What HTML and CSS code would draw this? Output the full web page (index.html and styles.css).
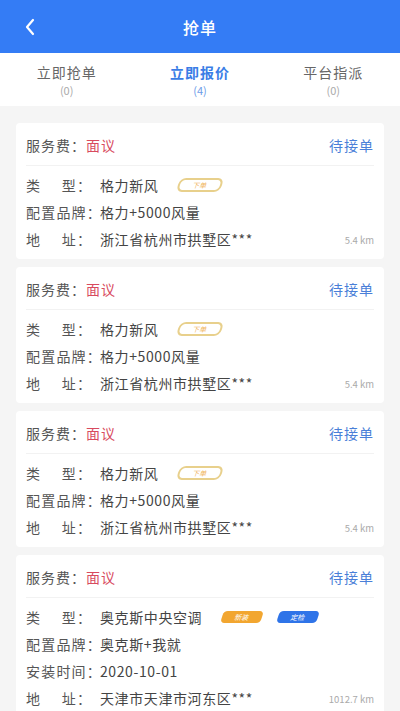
FILE: index.html
```html
<!DOCTYPE html>
<html lang="zh-CN">
<head>
    <meta charset="UTF-8">
    <meta name="viewport" content="width=device-width, initial-scale=1.0">
    <title>抢单</title>
    <link rel="stylesheet" href="styles.css">
</head>
<body>
    <div class="topbar">
        <svg class="back" width="12" height="18" viewBox="0 0 12 18">
            <polyline points="9,2 3,9 9,16" fill="none" stroke="#fff" stroke-width="2.2" stroke-linecap="round" stroke-linejoin="round"/>
        </svg>
        <div class="title">抢单</div>
    </div>

    <div class="tabs">
        <div class="tab">
            <span class="tab-name">立即抢单</span>
            <span class="tab-count">(0)</span>
        </div>
        <div class="tab active">
            <span class="tab-name">立即报价</span>
            <span class="tab-count">(4)</span>
        </div>
        <div class="tab">
            <span class="tab-name">平台指派</span>
            <span class="tab-count">(0)</span>
        </div>
    </div>

    <div class="list">
        <div class="card">
            <div class="card-head">
                <div class="fee">服务费：<span class="price">面议</span></div>
                <div class="status">待接单</div>
            </div>
            <div class="card-body">
                <div class="row">
                    <div class="label"><span class="name short">类型</span>：</div>
                    <div class="value">格力新风</div>
                    <span class="tag outline">下单</span>
                </div>
                <div class="row">
                    <div class="label"><span class="name">配置品牌</span>：</div>
                    <div class="value">格力+5000风量</div>
                </div>
                <div class="row">
                    <div class="label"><span class="name short">地址</span>：</div>
                    <div class="value">浙江省杭州市拱墅区***</div>
                    <span class="distance">5.4 km</span>
                </div>
            </div>
        </div>

        <div class="card">
            <div class="card-head">
                <div class="fee">服务费：<span class="price">面议</span></div>
                <div class="status">待接单</div>
            </div>
            <div class="card-body">
                <div class="row">
                    <div class="label"><span class="name short">类型</span>：</div>
                    <div class="value">格力新风</div>
                    <span class="tag outline">下单</span>
                </div>
                <div class="row">
                    <div class="label"><span class="name">配置品牌</span>：</div>
                    <div class="value">格力+5000风量</div>
                </div>
                <div class="row">
                    <div class="label"><span class="name short">地址</span>：</div>
                    <div class="value">浙江省杭州市拱墅区***</div>
                    <span class="distance">5.4 km</span>
                </div>
            </div>
        </div>

        <div class="card">
            <div class="card-head">
                <div class="fee">服务费：<span class="price">面议</span></div>
                <div class="status">待接单</div>
            </div>
            <div class="card-body">
                <div class="row">
                    <div class="label"><span class="name short">类型</span>：</div>
                    <div class="value">格力新风</div>
                    <span class="tag outline">下单</span>
                </div>
                <div class="row">
                    <div class="label"><span class="name">配置品牌</span>：</div>
                    <div class="value">格力+5000风量</div>
                </div>
                <div class="row">
                    <div class="label"><span class="name short">地址</span>：</div>
                    <div class="value">浙江省杭州市拱墅区***</div>
                    <span class="distance">5.4 km</span>
                </div>
            </div>
        </div>

        <div class="card">
            <div class="card-head">
                <div class="fee">服务费：<span class="price">面议</span></div>
                <div class="status">待接单</div>
            </div>
            <div class="card-body">
                <div class="row">
                    <div class="label"><span class="name short">类型</span>：</div>
                    <div class="value">奥克斯中央空调</div>
                    <span class="tag orange">新装</span>
                    <span class="tag blue">定检</span>
                </div>
                <div class="row">
                    <div class="label"><span class="name">配置品牌</span>：</div>
                    <div class="value">奥克斯+我就</div>
                </div>
                <div class="row">
                    <div class="label"><span class="name">安装时间</span>：</div>
                    <div class="value">2020-10-01</div>
                </div>
                <div class="row">
                    <div class="label"><span class="name short">地址</span>：</div>
                    <div class="value">天津市天津市河东区***</div>
                    <span class="distance">1012.7 km</span>
                </div>
            </div>
        </div>
    </div>
</body>
</html>
```

FILE: styles.css
```css
body {
    margin: 0;
    font-family: "Noto Sans CJK SC", "Noto Sans", sans-serif;
    background-color: #f5f5f5;
    color: #444;
}
.topbar {
    position: relative;
    height: 53px;
    background-color: #347cf5;
    display: flex;
    align-items: center;
    justify-content: center;
}
.back {
    position: absolute;
    left: 24px;
    top: 18px;
}
.title {
    color: #fff;
    font-size: 16px;
    font-weight: 500;
    letter-spacing: 1px;
}
.tabs {
    height: 53px;
    background: #fff;
    display: grid;
    grid-template-columns: 1fr 1fr 1fr;
}
.tab {
    display: flex;
    flex-direction: column;
    align-items: center;
    justify-content: center;
    padding-top: 2px;
}
.tab-name {
    font-size: 14px;
    letter-spacing: 1px;
    color: #666;
    line-height: 18px;
}
.tab-count {
    font-size: 11px;
    color: #aaa;
    line-height: 16px;
    margin-top: 1px;
}
.tab.active .tab-name {
    color: #3a7de6;
    font-weight: bold;
}
.tab.active .tab-count {
    color: #6b9be8;
}
.list {
    padding: 17px 16px 0;
    display: flex;
    flex-direction: column;
    gap: 8px;
}
.card {
    background: #fff;
    border-radius: 4px;
    padding: 0 10px;
}
.card-head {
    height: 43px;
    display: flex;
    align-items: center;
    justify-content: space-between;
    border-bottom: 1px solid #f2f2f2;
    font-size: 14px;
    letter-spacing: 1px;
    padding-top: 1px;
    box-sizing: border-box;
}
.fee {
    color: #555;
}
.price {
    color: #d84a5e;
}
.status {
    color: #4a7fd8;
}
.card-body {
    padding: 5px 0 7px;
}
.row {
    height: 27px;
    display: flex;
    align-items: center;
    font-size: 14px;
    letter-spacing: 0.6px;
    color: #555;
}
.label {
    width: 74px;
    flex: none;
    white-space: nowrap;
}
.name {
    display: inline-block;
    letter-spacing: 1.2px;
}
.name.short {
    width: 51px;
    text-align: justify;
    text-align-last: justify;
}
.value {
    color: #444;
    white-space: nowrap;
}
.tag {
    display: inline-block;
    width: 40px;
    height: 12px;
    line-height: 12px;
    font-size: 7px;
    text-align: center;
    letter-spacing: 0;
    border-radius: 4px;
    transform: skewX(-18deg);
    margin-left: 16px;
}
.tag.outline {
    border: 2px solid #e8d08c;
    color: #f0b45c;
    width: 40px;
    height: 10px;
    line-height: 10px;
    margin-left: 20px;
    border-radius: 6px;
}
.tag.orange {
    background: #f2a630;
    color: #fff;
    margin-left: 20px;
}
.tag.blue {
    background: #2f74e8;
    color: #fff;
}
.distance {
    margin-left: auto;
    font-size: 9.5px;
    letter-spacing: 0;
    color: #aaa;
    padding-top: 3px;
}
```
